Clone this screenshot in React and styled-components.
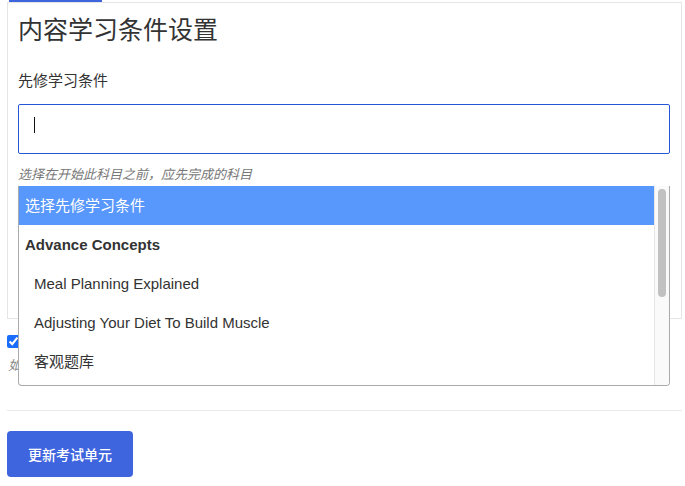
import React from "react";
import styled, { createGlobalStyle } from "styled-components";

const GlobalStyle = createGlobalStyle`
  html, body {
    margin: 0;
    padding: 0;
    background: #ffffff;
  }
  body {
    font-family: "Liberation Sans", "Noto Sans CJK SC", sans-serif;
    color: #333333;
  }
  * { box-sizing: border-box; }
`;

const Page = styled.div`
  width: 685px;
  padding: 0 3px 0 7px;
`;

const TabIndicator = styled.div`
  width: 93px;
  height: 2px;
  margin-left: 2px;
  background: #3f65de;
`;

const Panel = styled.section`
  border: 1px solid #e5e5e5;
  padding: 0 11px 134px 10px;
`;

const Title = styled.h2`
  margin: 12px 0 0;
  font-size: 25px;
  line-height: 30px;
  font-weight: 400;
  color: #333333;
`;

const Label = styled.div`
  margin-top: 25px;
  font-size: 15px;
  line-height: 21px;
  color: #333333;
`;

const FieldGroup = styled.div`
  position: relative;
  margin-top: 13px;
`;

const SearchBox = styled.div`
  height: 50px;
  border: 1px solid #2456d9;
  border-radius: 2px;
  padding: 12px 15px 0;
  display: flex;
  align-items: flex-start;
`;

const Caret = styled.span`
  display: block;
  width: 1px;
  height: 16px;
  background: #111111;
`;

const Help = styled.div`
  margin-top: 12px;
  font-size: 13px;
  line-height: 18px;
  font-style: italic;
  color: #777777;
`;

const Dropdown = styled.div`
  position: absolute;
  z-index: 10;
  top: calc(100% + 2px);
  left: 0;
  right: 0;
  display: flex;
  background: #ffffff;
  border: 1px solid #aaaaaa;
  border-top: none;
  border-radius: 0 0 4px 4px;
  overflow: hidden;
`;

const Options = styled.ul`
  flex: 1;
  list-style: none;
  margin: 0;
  padding: 0;
  height: 199px;
  overflow: hidden;
`;

const ScrollTrack = styled.div`
  width: 15px;
  height: 199px;
  padding: 3px 3px 0 3px;
  background: #fafafa;
  border-left: 1px solid #e6e6e6;
`;

const ScrollThumb = styled.div`
  width: 8px;
  height: 108px;
  border-radius: 4px;
  background: #c1c1c1;
`;

const Option = styled.li`
  padding: 9px 6px 9px ${(p) => (p.$nested ? "15px" : "6px")};
  font-size: 15px;
  line-height: 21px;
  font-weight: ${(p) => (p.$group ? 700 : 400)};
  color: ${(p) => (p.$active ? "#ffffff" : "#333333")};
  background: ${(p) => (p.$active ? "#5897fb" : "transparent")};
  white-space: nowrap;
`;

const CheckRow = styled.div`
  display: flex;
  align-items: center;
  margin-top: 16px;
  height: 13px;
`;

const Check = styled.input`
  width: 13px;
  height: 13px;
  margin: 0;
  accent-color: #1a6dfa;
`;

const Note = styled.div`
  margin-top: 9px;
  margin-left: 1px;
  width: 10px;
  overflow: hidden;
  white-space: nowrap;
  font-size: 13px;
  line-height: 18px;
  font-style: italic;
  color: #888888;
`;

const Divider = styled.hr`
  margin: 35px 0 0;
  border: none;
  border-top: 1px solid #ebebeb;
  height: 0;
`;

const SubmitButton = styled.button`
  margin-top: 20px;
  width: 126px;
  height: 46px;
  border: none;
  border-radius: 4px;
  background: #3f65de;
  color: #ffffff;
  font-family: "Liberation Sans", "Noto Sans CJK SC", sans-serif;
  font-size: 14px;
  font-weight: 500;
  cursor: pointer;
`;

const options = [
  { label: "选择先修学习条件", active: true },
  { label: "Advance Concepts", group: true },
  { label: "Meal Planning Explained", nested: true },
  { label: "Adjusting Your Diet To Build Muscle", nested: true },
  { label: "客观题库", nested: true },
  { label: "综合测试", nested: true },
];

export default function App() {
  return (
    <>
      <GlobalStyle />
      <Page>
        <TabIndicator />
        <Panel>
          <Title>内容学习条件设置</Title>
          <Label>先修学习条件</Label>
          <FieldGroup>
            <SearchBox>
              <Caret />
            </SearchBox>
            <Help>选择在开始此科目之前，应先完成的科目</Help>
            <Dropdown>
              <Options>
                {options.map((o) => (
                  <Option
                    key={o.label}
                    $active={o.active}
                    $group={o.group}
                    $nested={o.nested}
                  >
                    {o.label}
                  </Option>
                ))}
              </Options>
              <ScrollTrack>
                <ScrollThumb />
              </ScrollTrack>
            </Dropdown>
          </FieldGroup>
        </Panel>
        <CheckRow>
          <Check type="checkbox" defaultChecked aria-label="必须完成先修条件" />
        </CheckRow>
        <Note>如</Note>
        <Divider />
        <SubmitButton>更新考试单元</SubmitButton>
      </Page>
    </>
  );
}
